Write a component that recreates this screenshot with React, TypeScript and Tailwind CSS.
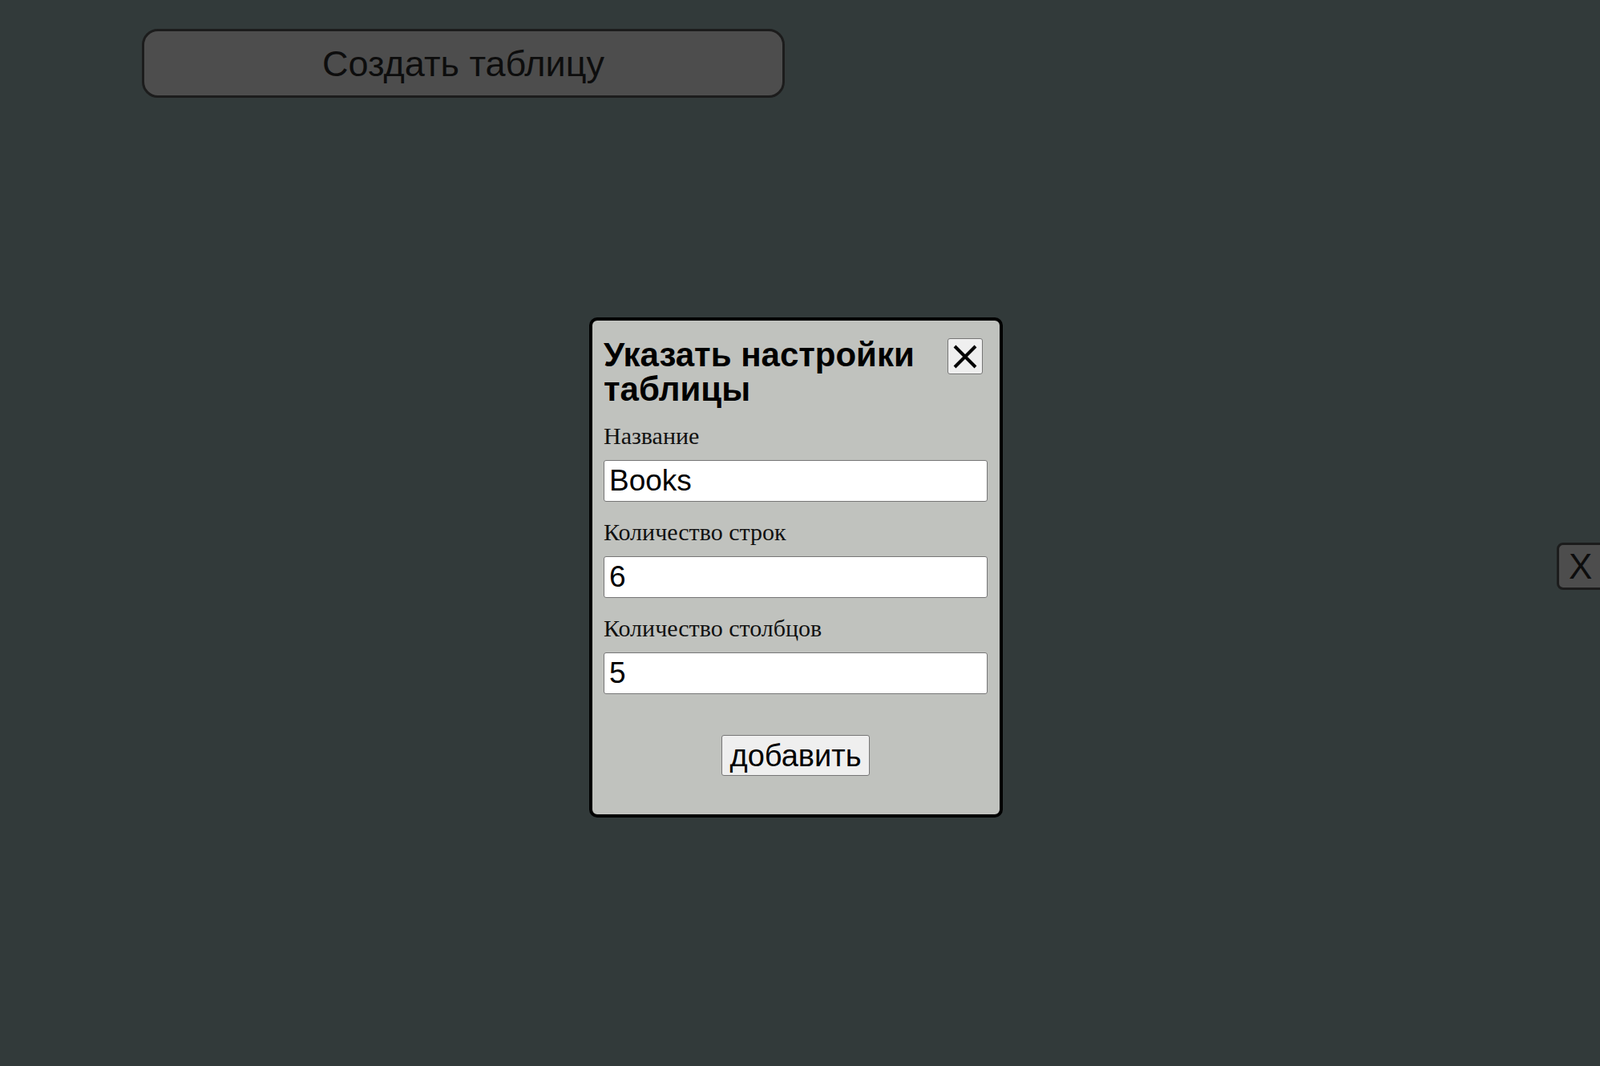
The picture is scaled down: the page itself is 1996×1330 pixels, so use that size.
import { useState } from 'react'

const fields = [
  { label: 'Название', value: 'Books' },
  { label: 'Количество строк', value: '6' },
  { label: 'Количество столбцов', value: '5' },
]

export default function App() {
  const [values, setValues] = useState(fields.map((f) => f.value))

  return (
    <div className="relative w-screen h-screen overflow-hidden bg-[#323a3a] font-['Liberation_Sans',Arial,sans-serif]">
      <div className="pl-[177px] pt-[36px]">
        <button className="w-[802px] h-[86px] rounded-[20px] border-[3px] border-[#1c1c1c] bg-[#4d4d4d] text-[45px] text-[#0d0d0d] leading-none">
          Создать таблицу
        </button>
      </div>

      {/* side panel close, sticks out past the right edge */}
      <button className="absolute left-[1942px] top-[677px] w-[80px] h-[59px] rounded-[8px] border-[3px] border-[#1c1c1c] bg-[#4d4d4d] pl-[12px] text-left text-[44px] leading-none text-[#0d0d0d]">
        X
      </button>

      {/* modal */}
      <div className="absolute left-[735px] top-[396px] w-[516px] rounded-[10px] border-4 border-black bg-[#c0c2be] pl-[14px] pr-[15px] pt-[21px] pb-[48px]">
        <div className="flex items-start justify-between">
          <h2 className="w-[410px] text-[42px] font-bold leading-[43px] text-black">
            Указать настройки таблицы
          </h2>
          <button className="mt-[1px] mr-[6px] flex h-[45px] w-[44px] shrink-0 items-center justify-center rounded-[3px] border border-[#767676] bg-[#efefef]">
            <svg width="28" height="28" viewBox="0 0 28 28" className="overflow-visible">
              <path d="M1 1L27 27M27 1L1 27" stroke="black" strokeWidth="4" fill="none" />
            </svg>
          </button>
        </div>

        {fields.map((f, i) => (
          <div key={f.label} className={i === 0 ? 'mt-[21px]' : 'mt-[22px]'}>
            <label className="block font-['Liberation_Serif','Times_New_Roman',serif] text-[30px] leading-[32px] text-[#111]">
              {f.label}
            </label>
            <input
              value={values[i]}
              onChange={(e) => {
                const next = [...values]
                next[i] = e.target.value
                setValues(next)
              }}
              className="mt-[14px] block h-[52px] w-full rounded-[3px] border border-[#767676] bg-white px-[6px] text-[37px] text-black outline-none"
            />
          </div>
        ))}

        <div className="mt-[51px] flex justify-center">
          <button className="h-[51px] rounded-[3px] border border-[#767676] bg-[#efefef] px-[10px] text-[38px] leading-none text-black">
            добавить
          </button>
        </div>
      </div>
    </div>
  )
}
